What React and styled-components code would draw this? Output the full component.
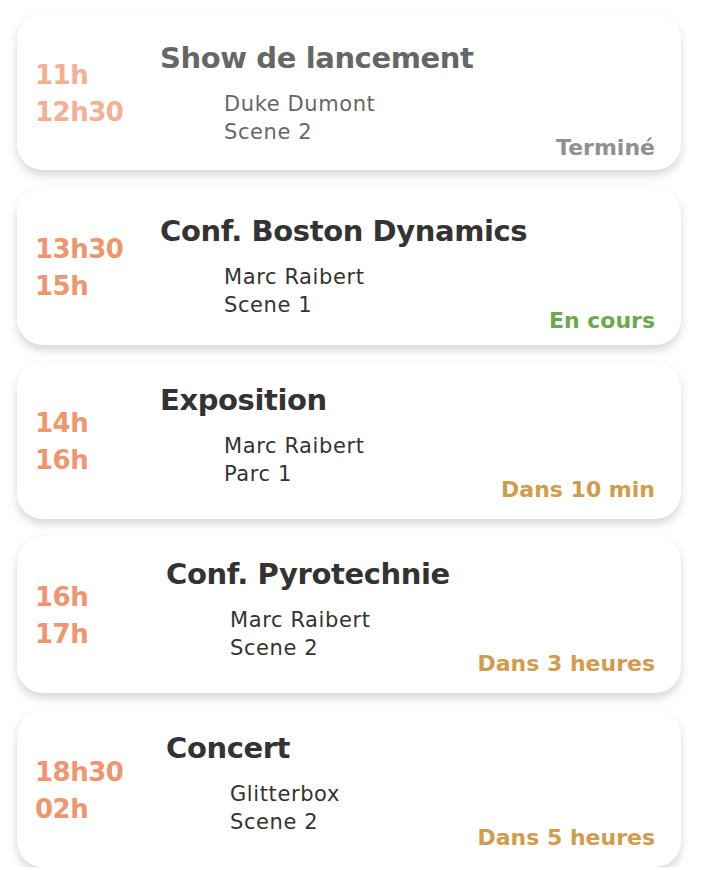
import React from 'react';
import styled, { createGlobalStyle } from 'styled-components';

const events = [
  {
    start: '11h',
    end: '12h30',
    title: 'Show de lancement',
    artist: 'Duke Dumont',
    place: 'Scene 2',
    status: 'Terminé',
    tone: 'done',
    indent: 0,
    top: 27,
  },
  {
    start: '13h30',
    end: '15h',
    title: 'Conf. Boston Dynamics',
    artist: 'Marc Raibert',
    place: 'Scene 1',
    status: 'En cours',
    tone: 'live',
    indent: 0,
    top: 26,
  },
  {
    start: '14h',
    end: '16h',
    title: 'Exposition',
    artist: 'Marc Raibert',
    place: 'Parc 1',
    status: 'Dans 10 min',
    tone: 'soon',
    indent: 0,
    top: 20,
  },
  {
    start: '16h',
    end: '17h',
    title: 'Conf. Pyrotechnie',
    artist: 'Marc Raibert',
    place: 'Scene 2',
    status: 'Dans 3 heures',
    tone: 'soon',
    indent: 6,
    top: 20,
  },
  {
    start: '18h30',
    end: '02h',
    title: 'Concert',
    artist: 'Glitterbox',
    place: 'Scene 2',
    status: 'Dans 5 heures',
    tone: 'soon',
    indent: 6,
    top: 20,
  },
];

const statusColors = {
  done: '#6b6b6b',
  live: '#6aaa4a',
  soon: '#d19c4c',
};

const GlobalStyle = createGlobalStyle`
  html, body {
    margin: 0;
    padding: 0;
    background: #fff;
    overflow: hidden;
  }
  body {
    font-family: "DejaVu Sans", "Liberation Sans", sans-serif;
    color: #333;
  }
`;

const List = styled.div`
  display: flex;
  flex-direction: column;
  gap: 17px;
  padding: 13px 0 0 17px;
  width: 664px;
`;

const Card = styled.div`
  height: 157.25px;
  box-sizing: border-box;
  background: #fff;
  border-radius: 26px;
  box-shadow: 0 5px 10px rgba(0, 0, 0, 0.16);
  padding: 0 26px 0 18px;
`;

const Inner = styled.div`
  height: 100%;
  display: grid;
  grid-template-columns: 125px 1fr;
  opacity: ${props => (props.faded ? 0.75 : 1)};
`;

const Times = styled.div`
  align-self: center;
  display: flex;
  flex-direction: column;
  padding-top: 4px;
  font-size: 26px;
  font-weight: 700;
  line-height: 37px;
  color: #ef966f;
  letter-spacing: -0.5px;
`;

const Main = styled.div`
  display: flex;
  flex-direction: column;
  padding-top: ${props => props.top}px;
  padding-left: ${props => props.indent}px;
`;

const Title = styled.div`
  font-size: 29px;
  font-weight: 700;
  line-height: 36px;
  color: #333;
  letter-spacing: -0.4px;
  white-space: nowrap;
`;

const Body = styled.div`
  display: flex;
  justify-content: space-between;
  align-items: flex-end;
  margin-top: 14px;
`;

const Details = styled.div`
  padding-left: 64px;
  font-size: 21px;
  line-height: 28px;
  letter-spacing: 0.6px;
  color: #333;
`;

const Status = styled.div`
  font-size: 22px;
  font-weight: 700;
  line-height: 26px;
  margin-bottom: -15px;
  color: ${props => statusColors[props.tone]};
`;

const App = () => (
  <>
    <GlobalStyle />
    <List>
      {events.map(item => (
        <Card key={item.title}>
          <Inner faded={item.tone === 'done'}>
            <Times>
              <span>{item.start}</span>
              <span>{item.end}</span>
            </Times>
            <Main top={item.top} indent={item.indent}>
              <Title>{item.title}</Title>
              <Body>
                <Details>
                  <div>{item.artist}</div>
                  <div>{item.place}</div>
                </Details>
                <Status tone={item.tone}>{item.status}</Status>
              </Body>
            </Main>
          </Inner>
        </Card>
      ))}
    </List>
  </>
);

export default App;
